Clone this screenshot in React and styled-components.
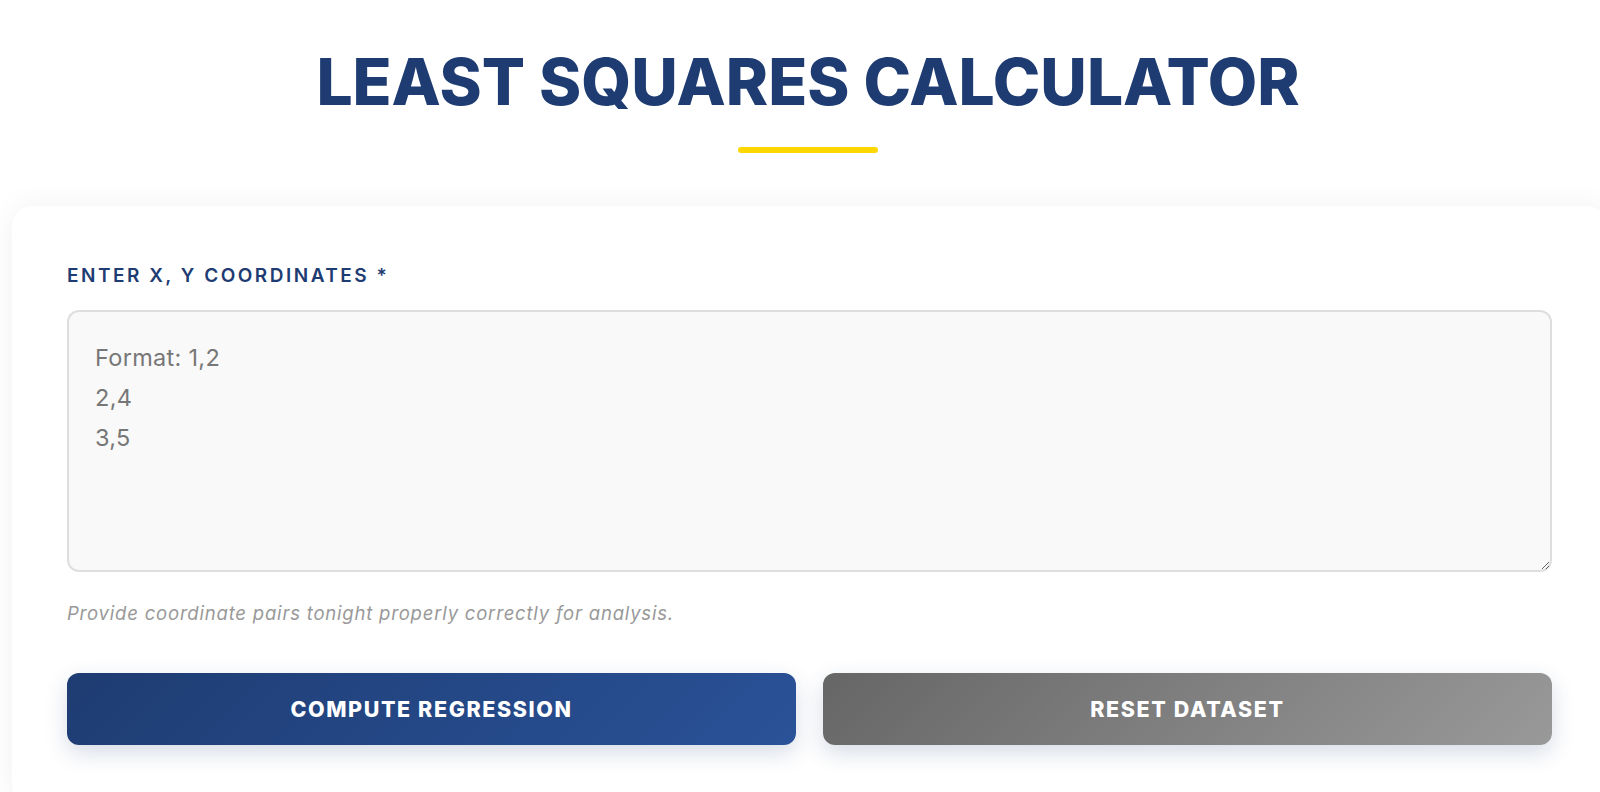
import React from 'react';
import styled, { createGlobalStyle } from 'styled-components';

const GlobalStyle = createGlobalStyle`
  body {
    margin: 0;
    background: #fff;
    font-family: 'Inter', 'Open Sans', sans-serif;
    overflow: hidden;
  }
`;

const Page = styled.div`
  padding-top: 50px;
`;

const Header = styled.header`
  padding-left: 16px;
  text-align: center;
`;

const Title = styled.h1`
  margin: 0;
  font-size: 64px;
  line-height: 1;
  font-weight: 800;
  letter-spacing: 0;
  color: #1e3c72;
  text-transform: uppercase;
`;

const Underline = styled.div`
  width: 140px;
  height: 6px;
  margin: 33px auto 0;
  border-radius: 3px;
  background: #ffd700;
`;

const Card = styled.section`
  box-sizing: border-box;
  width: 1595px;
  margin: 53px 0 0 12px;
  padding: 58px 55px;
  background: #fff;
  border-radius: 20px;
  box-shadow: 0 0 30px rgba(0, 0, 0, 0.06);
`;

const Label = styled.label`
  display: block;
  font-size: 19px;
  line-height: 24px;
  font-weight: 600;
  letter-spacing: 2.5px;
  color: #1e3c72;
  text-transform: uppercase;
`;

const TextArea = styled.textarea`
  display: block;
  box-sizing: border-box;
  width: 100%;
  height: 262px;
  margin-top: 22px;
  padding: 26px;
  border: 2px solid #dedede;
  border-radius: 12px;
  background: #f9f9f9;
  font-family: 'Inter', 'Open Sans', sans-serif;
  font-size: 23.5px;
  line-height: 40px;
  letter-spacing: 0.3px;
  color: #555;
  outline: none;

  &::placeholder {
    color: #777;
  }
`;

const Helper = styled.p`
  margin: 29px 0 0;
  font-size: 18.5px;
  line-height: 24px;
  font-style: italic;
  letter-spacing: 0.8px;
  color: #999;
`;

const ButtonRow = styled.div`
  display: grid;
  grid-template-columns: 1fr 1fr;
  gap: 27px;
  margin-top: 48px;
`;

const Button = styled.button`
  height: 72px;
  border: none;
  border-radius: 12px;
  background: ${(p) => p.$bg};
  color: #fff;
  font-family: 'Inter', 'Open Sans', sans-serif;
  font-size: 21.5px;
  font-weight: 800;
  letter-spacing: 1.6px;
  text-transform: uppercase;
  box-shadow: 0 8px 22px rgba(30, 60, 114, 0.18);
  cursor: pointer;
`;

const App = () => {
  return (
    <Page>
      <GlobalStyle />
      <Header>
        <Title>Least Squares Calculator</Title>
        <Underline />
      </Header>
      <Card>
        <Label htmlFor='coords'>Enter X, Y Coordinates *</Label>
        <TextArea id='coords' placeholder={'Format: 1,2\n2,4\n3,5'} />
        <Helper>Provide coordinate pairs tonight properly correctly for analysis.</Helper>
        <ButtonRow>
          <Button $bg='linear-gradient(135deg, #1e3c72 0%, #2a5298 100%)'>Compute Regression</Button>
          <Button $bg='linear-gradient(135deg, #666 0%, #999 100%)'>Reset Dataset</Button>
        </ButtonRow>
      </Card>
    </Page>
  );
};

export default App;
